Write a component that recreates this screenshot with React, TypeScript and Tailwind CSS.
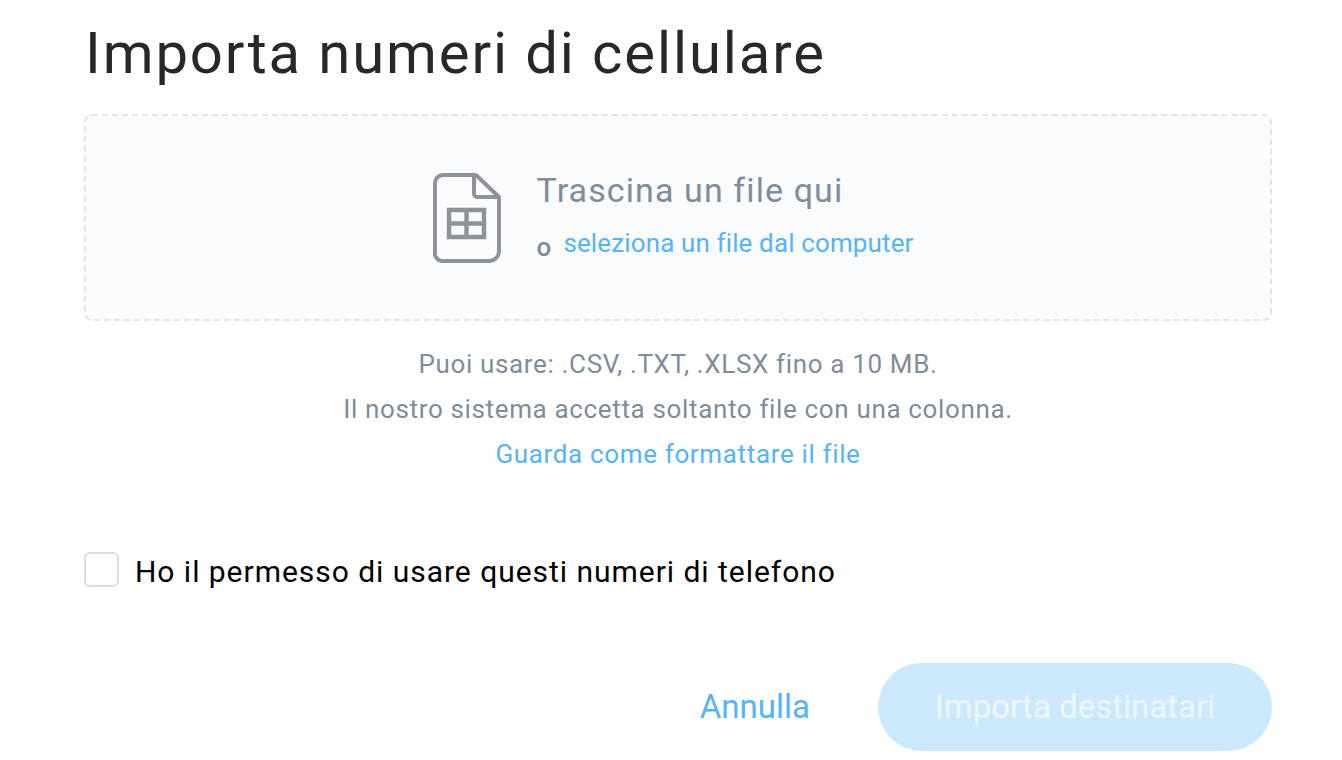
import React from "react";

function SheetIcon() {
  return (
    <svg width="68" height="90" viewBox="0 0 68 90" fill="none" stroke="#8e9399" strokeWidth="4">
      <path d="M10 2H43L66 24V78a10 10 0 0 1-10 10H10A8 8 0 0 1 2 78V10A8 8 0 0 1 10 2Z" strokeLinejoin="round" />
      <path d="M41 2V21a3 3 0 0 0 3 3H66" strokeLinejoin="round" />
      <path d="M16 37H51V64H16ZM33.5 37V64M16 50.5H51" strokeWidth="4.5" />
    </svg>
  );
}

export default function App() {
  return (
    <div className="w-[1342px] h-[760px] overflow-hidden bg-white pl-[84px] pr-[70px] font-['Roboto',sans-serif]">
      <div className="ml-[1px] pt-[19px] h-[114px] text-[58px] leading-[68px] tracking-[1.88px] text-[#26282d]">
        Importa numeri di cellulare
      </div>

      <div className="w-[1188px] h-[207px] flex items-center justify-center gap-[35px] rounded-lg border-2 border-dashed border-[#e2e5e9] bg-[#fafbfd] pr-[9px]">
        <SheetIcon />
        <div className="mb-[6px]">
          <div className="text-[34px] leading-[40px] tracking-[1.1px] text-[#7f8c9b]">Trascina un file qui</div>
          <div className="mt-[18px] flex items-baseline gap-[12px] text-[26px] leading-[32px] tracking-[0.13px]">
            <span className="relative top-[3px] text-[#7f8c9b] font-medium">o</span>
            <span className="relative top-[-1px] text-[#55b4f5]">seleziona un file dal computer</span>
          </div>
        </div>
      </div>

      <div className="mt-[21px] flex flex-col items-center text-[26px] leading-[45px] tracking-[0.65px] text-[#7f8c9b]">
        <div>Puoi usare: .CSV, .TXT, .XLSX fino a 10 MB.</div>
        <div>Il nostro sistema accetta soltanto file con una colonna.</div>
        <div className="text-[#55b4f5]">Guarda come formattare il file</div>
      </div>

      <div className="mt-[72px] flex items-center gap-[16px]">
        <div className="w-[35px] h-[35px] rounded-md border-[2.5px] border-[#dcdcdc] bg-white" />
        <div className="pt-[5px] text-[30px] leading-[36px] tracking-[0.97px] text-black">Ho il permesso di usare questi numeri di telefono</div>
      </div>

      <div className="mt-[73px] flex items-center justify-end gap-[68px]">
        <div className="text-[33px] text-[#55b4f5]">Annulla</div>
        <div className="w-[394px] h-[88px] flex items-center justify-center rounded-full bg-[#cce8fd] text-[33px] text-white/70">Importa destinatari</div>
      </div>
    </div>
  );
}
